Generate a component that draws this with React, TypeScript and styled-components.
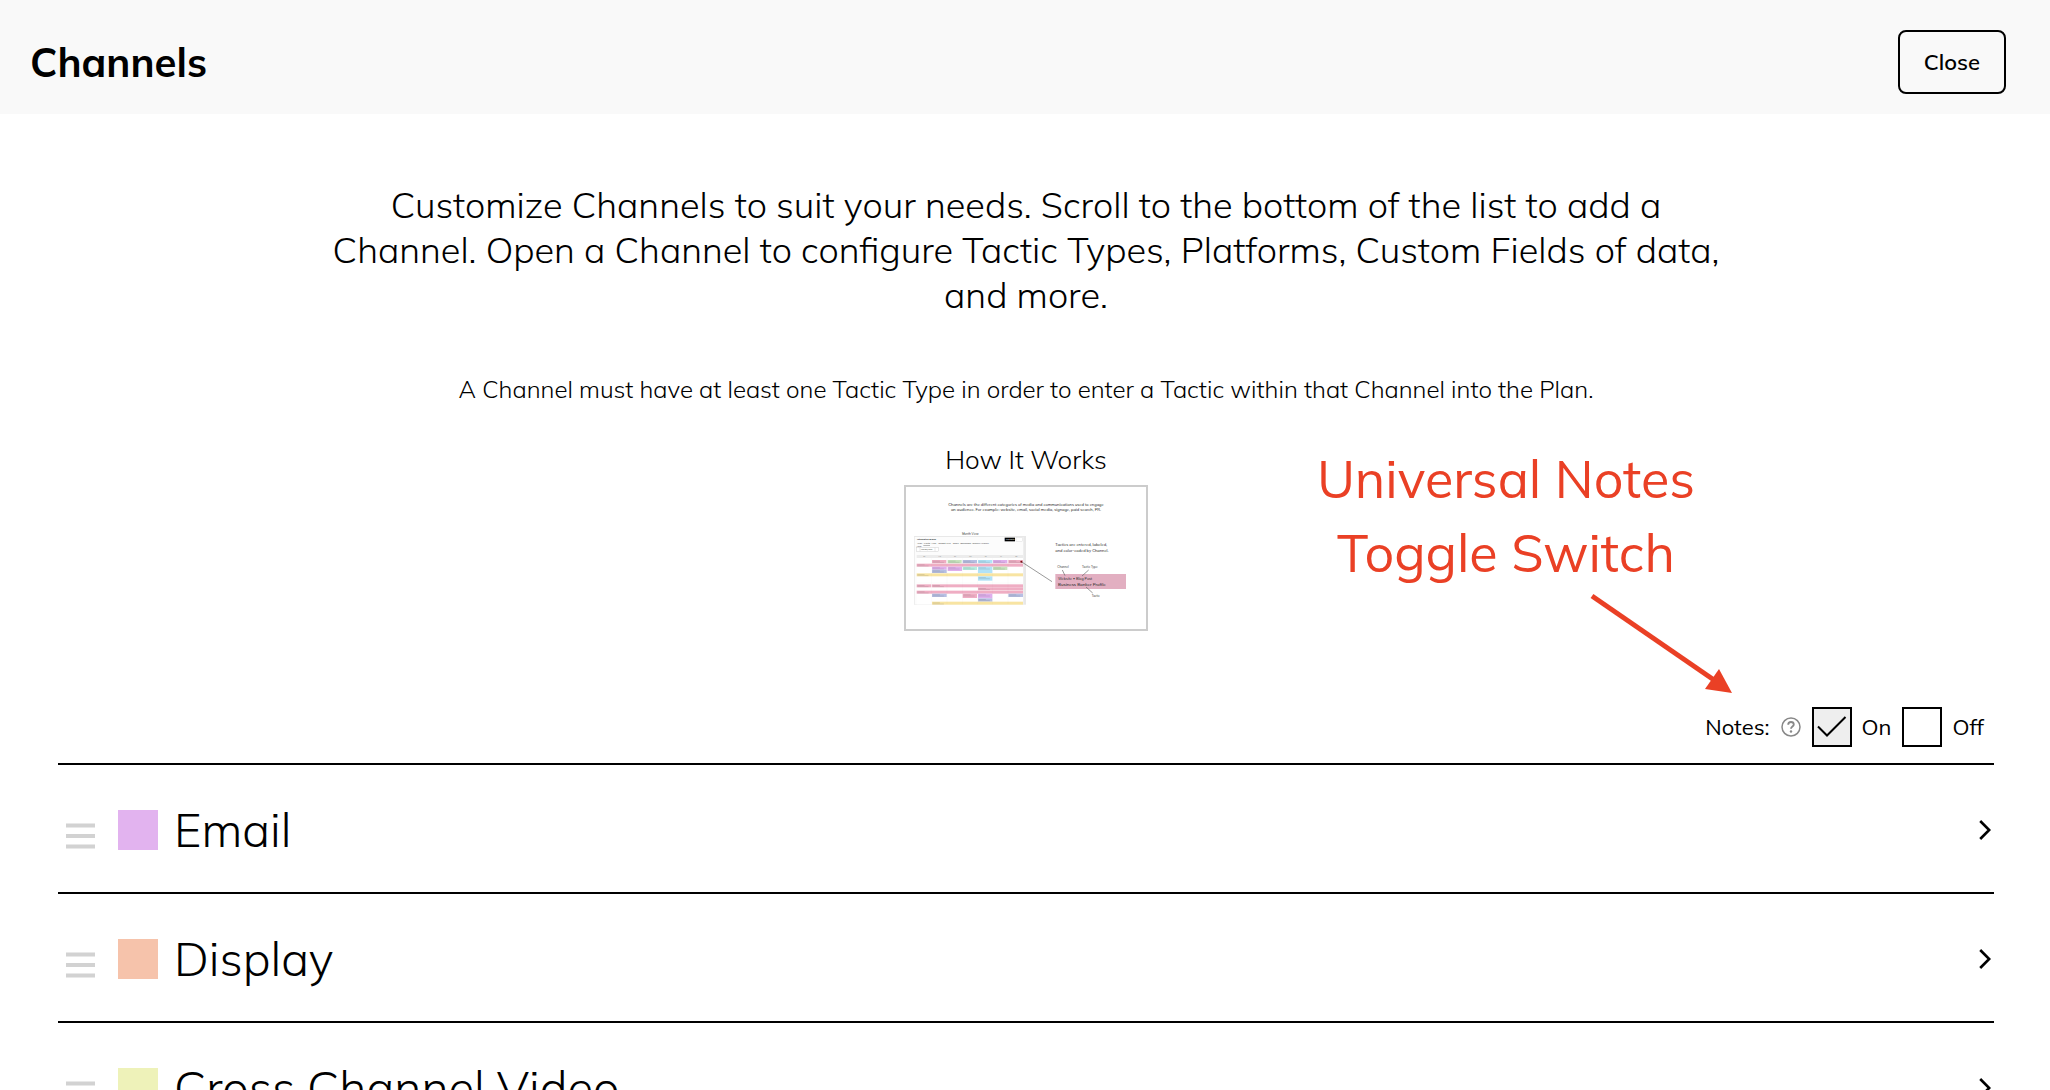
import { useId, useState } from "react";
import styled, { createGlobalStyle } from "styled-components";

const GlobalStyle = createGlobalStyle`
  *, *::before, *::after { box-sizing: border-box; }
  body {
    margin: 0;
    background: #fff;
    color: #000;
    font-family: Mulish, "Open Sans", "Noto Sans", sans-serif;
    scrollbar-width: none;
  }
  html { scrollbar-width: none; }
  button, input { font: inherit; color: inherit; margin: 0; }
`;

const Header = styled.header`
  display: flex;
  align-items: center;
  justify-content: space-between;
  height: 114px;
  padding: 10px 44px 0 30px;
  background: #f9f9f9;
`;

const Title = styled.h1`
  margin: 0;
  font-size: 40px;
  line-height: 50px;
  font-weight: 700;
`;

const CloseButton = styled.button`
  height: 64px;
  padding: 0 24px;
  border: 2px solid #000;
  border-radius: 8px;
  background: transparent;
  font-size: 22px;
  font-weight: 600;
  line-height: 28px;
  cursor: pointer;
`;

const Main = styled.main`
  position: relative;
  display: flex;
  flex-direction: column;
  padding: 68px 56px 0 58px;
`;

const Intro = styled.p`
  align-self: center;
  max-width: 1420px;
  margin: 0;
  font-size: 36px;
  line-height: 45px;
  font-weight: 300;
  text-align: center;
`;

const Requirement = styled.p`
  margin: 56px 0 0;
  font-size: 24px;
  line-height: 32px;
  font-weight: 300;
  text-align: center;
`;

const HowItWorks = styled.figure`
  display: flex;
  flex-direction: column;
  align-items: center;
  gap: 8px;
  margin: 38px 0 0;
`;

const Caption = styled.figcaption`
  font-size: 26px;
  line-height: 34px;
  font-weight: 300;
`;

const Thumbnail = styled.button`
  display: block;
  width: 244px;
  height: 146px;
  padding: 0;
  border: 2px solid #ccc;
  background: #fff;
  cursor: pointer;

  svg { display: block; width: 100%; height: 100%; }
`;

const NotesBar = styled.fieldset`
  display: flex;
  align-items: center;
  justify-content: flex-end;
  gap: 11px;
  margin: 76px 0 16px;
  padding: 0 10px 0 0;
  border: 0;
  font-size: 22px;
  line-height: 28px;
`;

const HelpButton = styled.button`
  display: flex;
  padding: 0;
  border: 0;
  background: none;
  cursor: pointer;
`;

const ToggleLabel = styled.label`
  display: flex;
  align-items: center;
  gap: 10px;
  cursor: pointer;
`;

const Box = styled.span`
  display: grid;

  > * { grid-area: 1 / 1; }
  svg { pointer-events: none; }
`;

const Tick = styled.input`
  appearance: none;
  width: 40px;
  height: 40px;
  border: 2px solid #000;
  background: #fff;

  &:checked { background: #eee; }
`;

const ChannelList = styled.ul`
  margin: 0;
  padding: 0;
  list-style: none;
`;

const ChannelRow = styled.li`
  display: flex;
  align-items: center;
  height: 129px;
  padding: 2px 3px 0 8px;
  border-top: 2px solid #000;
`;

const DragHandle = styled.button`
  display: flex;
  padding: 12px 0 0;
  border: 0;
  background: none;
  cursor: grab;
`;

const OpenButton = styled.button`
  display: flex;
  flex: 1;
  align-items: center;
  gap: 16px;
  margin-left: 23px;
  padding: 0;
  border: 0;
  background: none;
  text-align: left;
  cursor: pointer;
`;

const Swatch = styled.span<{ $color: string }>`
  width: 40px;
  height: 40px;
  background: ${(p) => p.$color};
`;

const ChannelName = styled.span`
  flex: 1;
  font-size: 47px;
  line-height: 60px;
  font-weight: 300;
`;

const Callout = styled.aside`
  position: absolute;
  top: 328px;
  right: 318px;
  display: flex;
  flex-direction: column;
  color: #ea4025;
`;

const CalloutText = styled.p`
  width: 452px;
  margin: 0;
  font-size: 52px;
  line-height: 74px;
  text-align: center;
`;

const CalloutArrow = styled.svg`
  align-self: flex-end;
`;

const channels = [
  { name: "Email", color: "#e2b3ef" },
  { name: "Display", color: "#f6c3ab" },
  { name: "Cross Channel Video", color: "#eef2b9" },
];

const pink = "#efadc3";
const green = "#c6e3bd";
const blue = "#b6bfe3";
const sky = "#b1e2f7";
const violet = "#dfaeec";
const mint = "#b7ede0";
const yellow = "#f8e4a2";

const blocks: [number, number, number, number, string][] = [
  [126, 390, 43, 10, pink],
  [173, 390, 42, 10, green],
  [218, 390, 43, 10, blue],
  [264, 390, 43, 10, sky],
  [309, 390, 43, 10, violet],
  [355, 390, 44, 10, pink],
  [80, 401, 319, 9, pink],
  [126, 410, 44, 9, violet],
  [126, 419, 44, 10, blue],
  [173, 410, 43, 13, violet],
  [218, 410, 43, 10, mint],
  [264, 410, 43, 20, sky],
  [309, 410, 43, 10, green],
  [80, 430, 319, 9, yellow],
  [264, 439, 43, 13, sky],
  [80, 463, 44, 9, pink],
  [126, 463, 273, 9, pink],
  [264, 472, 135, 9, pink],
  [80, 482, 319, 9, pink],
  [126, 491, 44, 10, blue],
  [218, 491, 43, 13, pink],
  [264, 491, 43, 14, violet],
  [264, 505, 43, 10, blue],
  [355, 491, 44, 10, blue],
  [126, 515, 273, 9, yellow],
];

function Illustration() {
  return (
    <svg viewBox="48 171 720 426" aria-hidden="true" fill="#333">
      <g fontSize="12" fontWeight="500" textAnchor="middle">
        <text x="408" y="227">Channels are the different categories of media and communications used to engage</text>
        <text x="408" y="244">an audience. For example: website, email, social media, signage, paid search, PR.</text>
      </g>
      <text x="241" y="314" fontSize="9" textAnchor="middle">Month View</text>
      <rect x="72" y="318" width="336" height="206" fill="#e8e8e8" />
      <rect x="74" y="321" width="326" height="202" fill="#fcfcfc" />
      <text x="81" y="331" fontSize="7" fontWeight="700">Integrated Brand</text>
      <rect x="344" y="323" width="31" height="11" fill="#000" />
      <text x="348" y="331" fontSize="5" fill="#fff">New Tactic</text>
      <rect x="378" y="323" width="19" height="11" fill="#fff" stroke="#ccc" />
      <g fontSize="6">
        <text x="82" y="342">▫Plan</text>
        <text x="101" y="342">▫Month</text>
        <text x="124" y="342">▫Year</text>
        <text x="144" y="342">▫Budget</text>
        <text x="168" y="342">▫Files</text>
        <text x="188" y="342">▫Goals</text>
        <text x="210" y="342">▫Dashboard</text>
        <text x="246" y="342">▫Channel Measure</text>
        <text x="80" y="351" fontSize="5">Month</text>
      </g>
      <rect x="100" y="345" width="20" height="2" fill="#999" />
      <rect x="80" y="353" width="66" height="11" fill="#fff" stroke="#bbb" />
      <path d="M90 353v11M135 353v11" stroke="#bbb" />
      <text x="93" y="361" fontSize="5">February 2022</text>
      <rect x="80" y="375" width="319" height="9" fill="#ececec" />
      <g fontSize="5" textAnchor="middle" fill="#777">
        {["Su", "Mo", "Tu", "We", "Th", "Fr", "Sa"].map((day, i) => (
          <text key={day} x={103 + i * 46} y="381">{day}</text>
        ))}
      </g>
      <rect x="80" y="384" width="319" height="139" fill="#fff" />
      {blocks.map(([x, y, w, h, color], i) => (
        <g key={i}>
          <rect x={x} y={y} width={w} height={h} fill={color} />
          <path
            d={`M${x + 2} ${y + 3.5}h${Math.min(w, 36) * 0.6}M${x + 2} ${y + 7}h${Math.min(w, 42) * 0.8}`}
            stroke="#555"
            strokeOpacity="0.5"
          />
        </g>
      ))}
      <path d="M80 459h319M125 384v139M171 384v139M217 384v139M262 384v139M308 384v139M354 384v139" stroke="#000" strokeOpacity="0.06" />
      <path d="M394 395L486 455" stroke="#666" strokeWidth="2" />
      <circle cx="394" cy="395" r="3" fill="#711" />
      <g fontSize="12" fontWeight="500">
        <text x="496" y="348">Tactics are entered, labeled,</text>
        <text x="496" y="365">and color-coded by Channel.</text>
      </g>
      <g fontSize="9">
        <text x="502" y="415">Channel</text>
        <text x="576" y="415">Tactic Type</text>
        <text x="605" y="500">Tactic</text>
      </g>
      <rect x="496" y="432" width="212" height="45" fill="#e2afc1" />
      <text x="504" y="449" fontSize="11" fontWeight="500">Website • Blog Post</text>
      <text x="504" y="467" fontSize="13" fontWeight="600">Business Banker Profile</text>
      <path d="M517 420l8 17M596 420l-20 18M588 471l20 18" stroke="#666" strokeWidth="2" />
    </svg>
  );
}

function HelpIcon() {
  return (
    <svg width="20" height="20" viewBox="0 0 20 20" fill="none" stroke="#888" strokeWidth="1.5" aria-hidden="true">
      <circle cx="10" cy="10" r="9" />
      <path d="M7.2 7.7c0-1.7 1.2-2.7 2.8-2.7s2.8 1 2.8 2.5c0 2-2.8 2.1-2.8 4.3" strokeWidth="1.8" />
      <circle cx="10" cy="14.5" r="1.2" fill="#888" stroke="none" />
    </svg>
  );
}

function NotesToggle({ label, checked, onChange }: { label: string; checked: boolean; onChange: () => void }) {
  const id = useId();
  return (
    <ToggleLabel htmlFor={id}>
      <Box>
        <Tick id={id} type="checkbox" checked={checked} onChange={onChange} />
        {checked && (
          <svg width="40" height="40" viewBox="0 0 40 40" fill="none" stroke="#000" strokeWidth="2" aria-hidden="true">
            <path d="M6 19.5l9 9L33.5 10" />
          </svg>
        )}
      </Box>
      {label}
    </ToggleLabel>
  );
}

export default function App() {
  const [notesOn, setNotesOn] = useState(true);

  return (
    <>
      <GlobalStyle />
      <Header>
        <Title>Channels</Title>
        <CloseButton type="button">Close</CloseButton>
      </Header>
      <Main>
        <Intro>
          Customize Channels to suit your needs. Scroll to the bottom of the list to add a Channel. Open a Channel to
          configure Tactic Types, Platforms, Custom Fields of data, and more.
        </Intro>
        <Requirement>
          A Channel must have at least one Tactic Type in order to enter a Tactic within that Channel into the Plan.
        </Requirement>
        <HowItWorks>
          <Caption>How It Works</Caption>
          <Thumbnail type="button" aria-label="How It Works">
            <Illustration />
          </Thumbnail>
        </HowItWorks>
        <NotesBar>
          <span>Notes:</span>
          <HelpButton type="button" aria-label="About notes">
            <HelpIcon />
          </HelpButton>
          <NotesToggle label="On" checked={notesOn} onChange={() => setNotesOn(true)} />
          <NotesToggle label="Off" checked={!notesOn} onChange={() => setNotesOn(false)} />
        </NotesBar>
        <ChannelList>
          {channels.map(({ name, color }) => (
            <ChannelRow key={name}>
              <DragHandle type="button" aria-label={`Reorder ${name}`}>
                <svg width="29" height="26" viewBox="0 0 29 26" fill="#d2d2d2" aria-hidden="true">
                  <path d="M0 0.5h29v4H0zM0 11h29v4H0zM0 21.5h29v4H0z" />
                </svg>
              </DragHandle>
              <OpenButton type="button">
                <Swatch $color={color} />
                <ChannelName>{name}</ChannelName>
                <svg width="12" height="20" viewBox="0 0 12 20" fill="none" stroke="#000" strokeWidth="2.6" aria-hidden="true">
                  <path d="M1.2 1l9 9-9 9" />
                </svg>
              </OpenButton>
            </ChannelRow>
          ))}
        </ChannelList>
        <Callout>
          <CalloutText>Universal Notes Toggle Switch</CalloutText>
          <CalloutArrow width="142" height="106" viewBox="0 0 142 106" aria-hidden="true">
            <path d="M2 6L124 90" stroke="#ea4025" strokeWidth="5" fill="none" />
            <path d="M129 79L142 103L115 99z" fill="#ea4025" />
          </CalloutArrow>
        </Callout>
      </Main>
    </>
  );
}
